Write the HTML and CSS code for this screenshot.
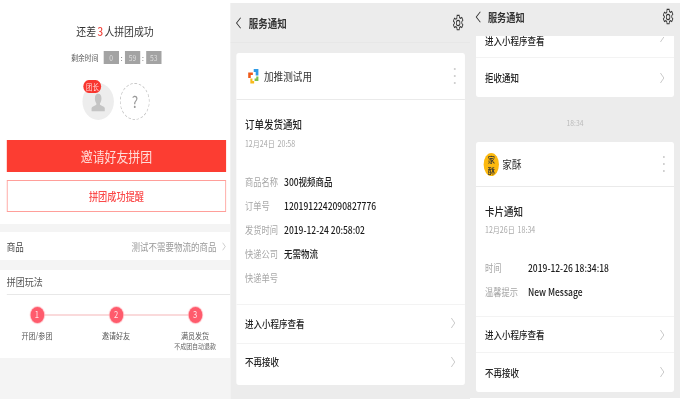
FILE: index.html
```html
<!DOCTYPE html>
<html lang="zh">
<head>
<meta charset="utf-8">
<title>拼团与服务通知</title>
<link rel="stylesheet" href="styles.css">
</head>
<body>
<svg class="defs" width="0" height="0">
  <symbol id="chev" viewBox="0 0 6 12"><path d="M1 1l4 5-4 5" fill="none" stroke="currentColor" stroke-width="1"/></symbol>
  <symbol id="back" viewBox="0 0 8 14"><path d="M7 1L1.500 7 7 13" fill="none" stroke="currentColor" stroke-width="1.200"/></symbol>
  <symbol id="gear" viewBox="0 0 20 20" preserveAspectRatio="none"><path d="M8.200 1.500h3.600l.5 2.500 1.600.8 2.300-1 1.800 3-1.900 1.700v1.900l1.900 1.700-1.800 3-2.300-1-1.600.8-.5 2.600H8.200l-.5-2.600-1.600-.8-2.300 1-1.800-3 1.900-1.700V9.500L2 7.800l1.800-3 2.300 1 1.600-.8z" fill="none" stroke="currentColor" stroke-width="1.300"/><circle cx="10" cy="10" r="3" fill="none" stroke="currentColor" stroke-width="1.300"/></symbol>
</svg>
<div class="stage">
  <section class="panel group">
    <h1 class="g-title">还差 <em>3</em> 人拼团成功</h1>
    <div class="timer">
      <span class="timer-label">剩余时间</span>
      <span class="tbox">0</span><span class="colon">:</span><span class="tbox">59</span><span class="colon">:</span><span class="tbox">53</span>
    </div>
    <div class="members">
      <div class="avatar">
        <svg class="person" viewBox="0 0 20 22"><path d="M10 1c3 0 4.500 2.300 4.500 5.500 0 2.500-1 4.500-2 5.500v1.500c2 1 6 2 6.500 4V21H1v-3.500c.5-2 4.500-3 6.500-4V12c-1-1-2-3-2-5.500C5.500 3.300 7 1 10 1z" fill="#c4c4c4"/></svg>
        <span class="badge">团长</span>
      </div>
      <div class="slot">?</div>
    </div>
    <button class="btn-main">邀请好友拼团</button>
    <button class="btn-line">拼团成功提醒</button>
    <div class="band b8"></div>
    <div class="goods">
      <span>商品</span>
      <span class="goods-val">测试不需要物流的商品<svg class="chev"><use href="#chev"/></svg></span>
    </div>
    <div class="band b10"></div>
    <div class="rules">
      <div class="rules-title">拼团玩法</div>
      <div class="steps">
        <div class="step"><span class="dot">1</span><span class="s-label">开团/参团</span></div>
        <div class="step"><span class="dot">2</span><span class="s-label">邀请好友</span></div>
        <div class="step"><span class="dot">3</span><span class="s-label">满员发货</span><span class="s-sub">不成团自动退款</span></div>
      </div>
    </div>
    <div class="band b41"></div>
  </section>

  <section class="panel notice n-a">
    <header class="bar bar-a">
      <svg class="back"><use href="#back"/></svg><span class="bar-title">服务通知</span>
      <svg class="gear"><use href="#gear"/></svg>
    </header>
    <article class="card card-a">
      <div class="c-head h46">
        <svg class="app" viewBox="0 0 14 16">
          <path d="M7.500 1H13v6.500H9.800V4H7.500z" fill="#2f9be6"/>
          <path d="M13 8.500V13H8.500v-2.500h2V8.500z" fill="#7cc04a"/>
          <path d="M3.500 10.500H6V13h2v2.500H3.500z" fill="#f8b91c"/>
          <path d="M1 4.500h5.500V7H4v3H1z" fill="#ee5a1a"/>
        </svg>
        <span class="c-name">加推测试用</span>
        <span class="kebab"><i></i><i></i><i></i></span>
      </div>
      <div class="c-body pb14">
        <div class="c-title">订单发货通知</div>
        <div class="c-date">12月24日 20:58</div>
        <dl class="fields w46">
          <div><dt>商品名称</dt><dd>300视频商品</dd></div>
          <div><dt>订单号</dt><dd>1201912242090827776</dd></div>
          <div><dt>发货时间</dt><dd>2019-12-24 20:58:02</dd></div>
          <div><dt>快递公司</dt><dd>无需物流</dd></div>
          <div><dt>快递单号</dt><dd></dd></div>
        </dl>
      </div>
      <div class="act h38">进入小程序查看<svg class="chev"><use href="#chev"/></svg></div>
      <div class="act h41">不再接收<svg class="chev"><use href="#chev"/></svg></div>
    </article>
  </section>

  <section class="panel notice n-b">
    <header class="bar bar-b">
      <svg class="back"><use href="#back"/></svg><span class="bar-title small">服务通知</span>
      <svg class="gear"><use href="#gear"/></svg>
    </header>
    <article class="card card-top">
      <div class="act clipped"><span>进入小程序查看</span><svg class="chev-cut" viewBox="0 5 6 7"><path d="M5 6l-4 5" fill="none" stroke="currentColor" stroke-width="1"/></svg></div>
      <div class="act h39">拒收通知<svg class="chev"><use href="#chev"/></svg></div>
    </article>
    <div class="stamp">18:34</div>
    <article class="card card-b">
      <div class="c-head h44">
        <span class="logo">家<br>酥</span>
        <span class="c-name tight">家酥</span>
        <span class="kebab"><i></i><i></i><i></i></span>
      </div>
      <div class="c-body pb12">
        <div class="c-title">卡片通知</div>
        <div class="c-date mt4">12月26日 18:34</div>
        <dl class="fields w50">
          <div><dt>时间</dt><dd>2019-12-26 18:34:18</dd></div>
          <div><dt>温馨提示</dt><dd>New Message</dd></div>
        </dl>
      </div>
      <div class="act h35">进入小程序查看<svg class="chev"><use href="#chev"/></svg></div>
      <div class="act h39b">不再接收<svg class="chev"><use href="#chev"/></svg></div>
    </article>
  </section>
</div>
</body>
</html>
```
FILE: styles.css
```css
* { box-sizing: border-box; margin: 0; padding: 0; }
html, body { width: 680px; height: 403px; overflow: hidden; background: #fff; }
body { font-family: "Noto Sans CJK SC", "Noto Sans", sans-serif; color: #333; }
.defs { position: absolute; }

/* The whole reference is squeezed horizontally; one scale reproduces that. */
.stage {
  display: flex;
  width: 800px;
  height: 403px;
  overflow: hidden;
  transform: scaleX(.85);
  transform-origin: 0 0;
  filter: blur(.3px);
}
.panel { flex: none; overflow: hidden; }

/* Panel 1 */
.group { width: 270.6px; height: 399px; display: flex; flex-direction: column; padding-top: 24px; background: #fff; }
.g-title { font-size: 11.600px; font-weight: 400; line-height: 14px; text-align: center; color: #333; word-spacing: -1px; }
.g-title em { font-style: normal; font-weight: 500; color: #f0443c; }
.timer { display: flex; justify-content: center; align-items: center; height: 13px; margin-top: 13px; padding-left: 3px; font-size: 8px; color: #555; }
.timer-label { margin-right: 6px; }
.tbox { width: 18px; height: 13px; line-height: 13px; text-align: center; background: #a3a3a3; color: #ddd; }
.colon { width: 7px; text-align: center; }
.members { display: flex; justify-content: center; gap: 7px; margin-top: 19px; height: 37px; padding-left: 3px; }
.avatar { position: relative; width: 37px; height: 37px; border-radius: 50%; background: #ededed; display: flex; align-items: flex-end; justify-content: center; padding-bottom: 8px; }
.person { width: 19px; height: 19px; }
.badge { position: absolute; top: -3px; left: 1px; width: 21px; height: 13px; border-radius: 7px; background: #f9362f; color: #ffd9d6; font-size: 7.500px; line-height: 13px; text-align: center; }
.slot { width: 35px; height: 37px; border: 1px dashed #c4c4c4; border-radius: 50%; text-align: center; font-size: 16px; line-height: 35px; color: #999; }
.btn-main, .btn-line { display: block; flex: none; width: 258px; height: 32px; margin-left: 8px; font-family: inherit; }
.btn-main { margin-top: 20px; background: #fc3d32; border: 0; color: #ffdcd8; font-size: 14px; }
.btn-line { margin-top: 8px; background: #fff; border: 1.500px solid #ff9f9a; color: #fb4a4a; font-size: 10.800px; font-weight: 500; }
.band { flex: none; background: #f4f4f4; }
.b8 { height: 8px; margin-top: 12px; }
.b10 { height: 10px; }
.b41 { height: 41px; }
.goods { flex: none; height: 28px; padding: 0 5px 0 8px; display: flex; justify-content: space-between; align-items: center; font-size: 10px; color: #444; }
.goods-val { display: flex; align-items: center; color: #999; }
.goods .chev { margin-left: 6px; width: 5px; height: 9px; color: #bbb; }
.rules { flex: none; height: 88px; }
.rules-title { margin-left: 8px; height: 25px; line-height: 24px; border-bottom: 1px solid #e8e8e8; font-size: 10.600px; color: #555; }
.steps { position: relative; display: flex; gap: 13px; padding: 12px 0 0 3.500px; }
.steps::before { content: ""; position: absolute; left: 43px; width: 186px; top: 19px; height: 2px; background: #fadadb; }
.step { position: relative; width: 80px; display: flex; flex-direction: column; align-items: center; }
.dot { width: 16px; height: 16px; border-radius: 50%; background: #ff5b6c; box-shadow: 0 0 1px 1px #ffc0c6; color: #ffe5e8; font-size: 9px; line-height: 16px; text-align: center; }
.s-label { margin-top: 6px; font-size: 8.300px; line-height: 12px; color: #555; white-space: nowrap; }
.s-sub { font-size: 7px; line-height: 10px; color: #666; white-space: nowrap; }

/* Notices */
.notice { margin-top: 3px; background: #ececec; }
.n-a { width: 282.4px; height: 396px; }
.n-b { width: 247px; height: 395px; }
.bar { position: relative; display: flex; align-items: center; color: #333; }
.bar-a { height: 40px; border-bottom: 1px solid #e7e7e7; padding: 0 7px 0 6px; }
.bar-b { height: 33px; padding: 0 7px 5px 6px; }
.back { width: 7px; height: 14px; color: #333; flex: none; }
.bar-title { margin-left: 9px; font-size: 11.200px; font-weight: 700; color: #333; }
.bar-title.small { margin-left: 8px; font-size: 10.800px; }
.gear { margin-left: auto; width: 14px; height: 18px; color: #333; flex: none; }

.card { background: #fff; border-radius: 3px; overflow: hidden; }
.card-a { margin: 10px 6px 0 7px; height: 332px; }
.card-top { margin: 0 7px; height: 61px; border-radius: 0 0 3px 3px; overflow: visible; }
.card-b { margin: 0 7px; height: 250px; }
.stamp { height: 45px; line-height: 52px; text-align: center; font-size: 8px; color: #bbb; }

.c-head { position: relative; display: flex; align-items: center; padding-left: 13px; border-bottom: 1px solid #eaeaea; }
.h46 { height: 47px; }
.h44 { height: 45px; padding-left: 9px; }
.app { width: 14px; height: 16px; flex: none; }
.c-name { margin-left: 6px; font-size: 11.300px; color: #333; }
.c-name.tight { margin-left: 4px; }
.logo { flex: none; width: 18px; height: 23px; border-radius: 50%; background: #fcb90f; color: #333; font-size: 8.500px; font-weight: 500; line-height: 11px; text-align: center; padding-top: 1px; overflow: hidden; }
.kebab { position: absolute; right: 11px; top: 50%; transform: translateY(-50%); display: flex; flex-direction: column; gap: 5px; }
.kebab i { display: block; width: 2px; height: 2px; background: #d0d0d0; }

.c-body { padding: 16px 0 0 10.600px; }
.pb14 { padding-bottom: 14px; }
.pb12 { padding-bottom: 12px; }
.c-title { font-size: 11.200px; font-weight: 500; line-height: 16px; color: #222; }
.c-date { margin-top: 5px; font-size: 8.300px; line-height: 12px; color: #aaa; word-spacing: 1.500px; }
.c-date.mt4 { margin-top: 4px; }
.fields { margin-top: 21px; font-size: 9.700px; line-height: 24px; }
.fields > div { display: flex; height: 24px; }
.fields dt { color: #a6a6a6; flex: none; }
.w46 dt { width: 46px; }
.w50 dt { width: 50.600px; }
.fields dd { color: #1c1c1c; font-size: 10px; font-weight: 500; white-space: nowrap; }

.act { display: flex; align-items: center; justify-content: space-between; padding: 0 11px 0 10.600px; font-size: 10px; font-weight: 500; color: #222; border-top: 1.500px solid #f3f3f3; }
.act .chev { width: 6px; height: 12px; color: #c6c6c6; flex: none; }
.h38 { height: 39px; padding-bottom: 2px; }
.h41 { height: 42px; padding-bottom: 6px; }
.h35 { height: 36px; }
.h39 { height: 40px; }
.h39b { height: 40px; padding-bottom: 1px; }
.clipped { height: 21px; border-top: 0; align-items: flex-start; line-height: 10px; }
.chev-cut { width: 6px; height: 7px; color: #c6c6c6; flex: none; }
```
